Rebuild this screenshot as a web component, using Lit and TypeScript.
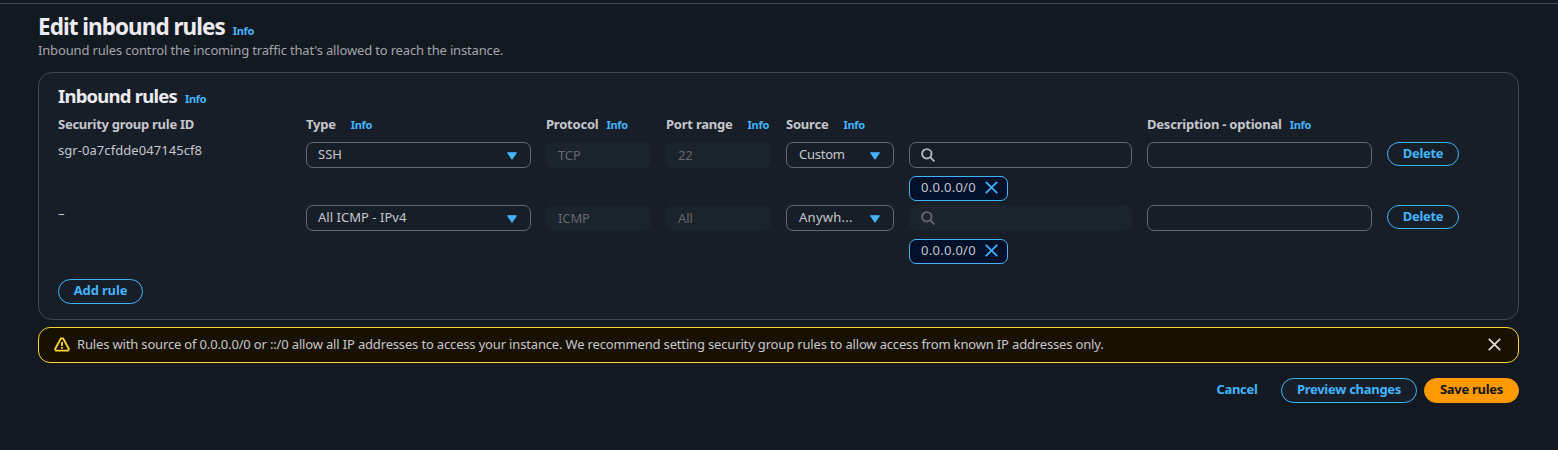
import { LitElement, html, svg, css } from "lit";
import { customElement } from "lit/decorators.js";

interface Rule {
  id: string;
  type: string;
  protocol: string;
  port: string;
  source: string;
  locked: boolean;
  cidr: string;
}

const RULES: Rule[] = [
  { id: "sgr-0a7cfdde047145cf8", type: "SSH", protocol: "TCP", port: "22", source: "Custom", locked: false, cidr: "0.0.0.0/0" },
  { id: "–", type: "All ICMP - IPv4", protocol: "ICMP", port: "All", source: "Anywh...", locked: true, cidr: "0.0.0.0/0" },
];

const caret = html`<svg class="caret" width="10" height="8" viewBox="0 0 10 8">
  ${svg`<path d="M.8 .8h8.4L5 7z" fill="#42b4ff" stroke="#42b4ff" stroke-width="1.2" stroke-linejoin="round" />`}
</svg>`;

const search = html`<svg class="search" width="14" height="14" viewBox="0 0 14 14">
  ${svg`<g fill="none" stroke="currentColor" stroke-width="1.9"><circle cx="5.8" cy="5.8" r="4.7" /><path d="M9.2 9.2l4.2 4.2" /></g>`}
</svg>`;

const cross = html`<svg class="cross" width="13" height="13" viewBox="0 0 13 13">
  ${svg`<path d="M.8.8l11.4 11.4M12.2.8L.8 12.2" fill="none" stroke="currentColor" stroke-width="1.7" />`}
</svg>`;

const warning = html`<svg class="warn" width="16" height="15" viewBox="0 0 16 15">
  ${svg`<g fill="none" stroke="#fbd332" stroke-width="1.8" stroke-linejoin="round"><path d="M7 1.3h2l5.9 10.7-.8 1.6H1.9L1.1 12z" /><path d="M8 5v4M8 10v1.8" /></g>`}
</svg>`;

@customElement("app-root")
export class AppRoot extends LitElement {
  static styles = css`
    :host {
      display: block;
      box-sizing: border-box;
      height: 450px;
      padding-top: 3px;
      overflow: hidden;
      background: #131920;
      color: #c6c6cd;
      font: 400 13px/20px "Noto Sans", "Open Sans", sans-serif;
      white-space: nowrap;
    }
    * { box-sizing: border-box; }
    svg { display: block; flex: none; }
    main {
      border-top: 1px solid #424650;
      padding: 9px 39px 0 38px;
    }
    h1, h2, p { margin: 0; color: #ebebf0; font-weight: 700; }
    h1 { font-size: 22.5px; line-height: 28px; letter-spacing: -0.97px; }
    h2 { font-size: 18.5px; line-height: 24px; letter-spacing: -0.78px; }
    .title { display: flex; align-items: baseline; gap: 8px; }
    .info {
      color: #42b4ff;
      font-size: 11px;
      font-weight: 700;
      line-height: 16px;
      letter-spacing: -0.3px;
    }
    .lead {
      color: #a4a4ad;
      font-weight: 400;
      line-height: 18px;
      letter-spacing: -0.16px;
    }
    .panel {
      height: 248px;
      margin-top: 13px;
      padding: 11px 19px 0;
      border: 1px solid #424650;
      border-radius: 14px;
      background: #171e27;
    }
    .grid {
      display: grid;
      grid-template-columns: 233px 225px 105px 105px 108px 223px 225px 72px;
      column-gap: 15px;
      align-items: start;
    }
    .head { height: 34px; padding-top: 6px; }
    .label {
      display: flex;
      align-items: baseline;
      line-height: 20px;
      font-weight: 700;
      letter-spacing: -0.22px;
      gap: 8px;
    }
    .wide { gap: 15px; }
    .desc { grid-column: 7; }
    .id-head { letter-spacing: -0.273px; }
    .row { height: 63px; }
    .rule-id { line-height: 16px; letter-spacing: 0.06px; }
    .box {
      display: flex;
      align-items: center;
      height: 26px;
      padding: 0 11px;
      border: 1px solid #656871;
      border-radius: 7px;
    }
    .box span { line-height: 20px; padding-bottom: 2px; }
    .select { justify-content: space-between; padding-right: 13.5px; letter-spacing: 0.03px; }
    .caret { margin-top: 1px; }
    .source { padding-left: 12px; letter-spacing: -0.26px; }
    .cut { letter-spacing: 0.27px; }
    .off { border-color: #1b232c; background: #1b232c; color: #656871; }
    .off span { padding: 0; letter-spacing: -0.1px; }
    .find { color: #b4b4bb; }
    .find.off { color: #656871; }
    .token {
      display: flex;
      align-items: center;
      gap: 9px;
      width: 99px;
      height: 25px;
      margin-top: 8px;
      padding: 0 9px 0 11px;
      border: 1px solid #42b4ff;
      border-radius: 7px;
      background: #001129;
      letter-spacing: 0.27px;
    }
    .token span { padding-bottom: 3px; }
    .token .cross { margin-bottom: 2px; color: #42b4ff; }
    .btn {
      display: flex;
      align-items: center;
      justify-content: center;
      height: 25px;
      padding: 0 0 3px;
      border: 1px solid #42b4ff;
      border-radius: 13px;
      background: #171e27;
      color: #42b4ff;
      font: inherit;
      font-weight: 700;
      letter-spacing: -0.28px;
    }
    .delete { width: 72px; height: 24px; padding-bottom: 2px; }
    .add { width: 85px; margin-top: 11px; letter-spacing: -0.15px; }
    .alert {
      display: flex;
      align-items: center;
      height: 36px;
      margin-top: 7px;
      padding: 0 17px 0 15px;
      border: 1px solid #fbd332;
      border-radius: 12px;
      background: #191100;
    }
    .warn { margin: 0 -0.5px 1px -0.5px; }
    .message { flex: 1; padding: 0 0 2px 8px; letter-spacing: -0.162px; }
    .alert .cross { margin-bottom: 2px; color: #dedee3; }
    .actions { display: flex; justify-content: flex-end; margin-top: 15px; }
    .cancel { width: 76px; margin-right: 6px; border-color: transparent; background: none; }
    .preview { width: 136px; margin-right: 7px; }
    .save { width: 95px; border-color: #ff9900; background: #ff9900; color: #0f141a; }
  `;

  private label(text: string, cls = "") {
    return html`<div class="label ${cls}"><span>${text}</span><a class="info">Info</a></div>`;
  }

  private row(r: Rule) {
    return html`<div class="grid row">
      <div class="rule-id">${r.id}</div>
      <div class="box select"><span>${r.type}</span>${caret}</div>
      <div class="box off"><span>${r.protocol}</span></div>
      <div class="box off"><span>${r.port}</span></div>
      <div class="box select source ${r.locked ? "cut" : ""}"><span>${r.source}</span>${caret}</div>
      <div>
        <div class="box find ${r.locked ? "off" : ""}">${search}</div>
        <div class="token"><span>${r.cidr}</span>${cross}</div>
      </div>
      <div class="box"></div>
      <button class="btn delete">Delete</button>
    </div>`;
  }

  render() {
    return html`<main>
      <div class="title"><h1>Edit inbound rules</h1><a class="info">Info</a></div>
      <p class="lead">Inbound rules control the incoming traffic that's allowed to reach the instance.</p>
      <section class="panel">
        <div class="title"><h2>Inbound rules</h2><a class="info">Info</a></div>
        <div class="grid head">
          <div class="label id-head">Security group rule ID</div>
          ${this.label("Type", "wide")} ${this.label("Protocol")} ${this.label("Port range", "wide")}
          ${this.label("Source", "wide")} ${this.label("Description - optional", "desc")}
        </div>
        ${RULES.map((r) => this.row(r))}
        <button class="btn add">Add rule</button>
      </section>
      <div class="alert">
        ${warning}
        <span class="message">Rules with source of 0.0.0.0/0 or ::/0 allow all IP addresses to access your instance. We recommend setting security group rules to allow access from known IP addresses only.</span>
        ${cross}
      </div>
      <div class="actions">
        <button class="btn cancel">Cancel</button>
        <button class="btn preview">Preview changes</button>
        <button class="btn save">Save rules</button>
      </div>
    </main>`;
  }
}
